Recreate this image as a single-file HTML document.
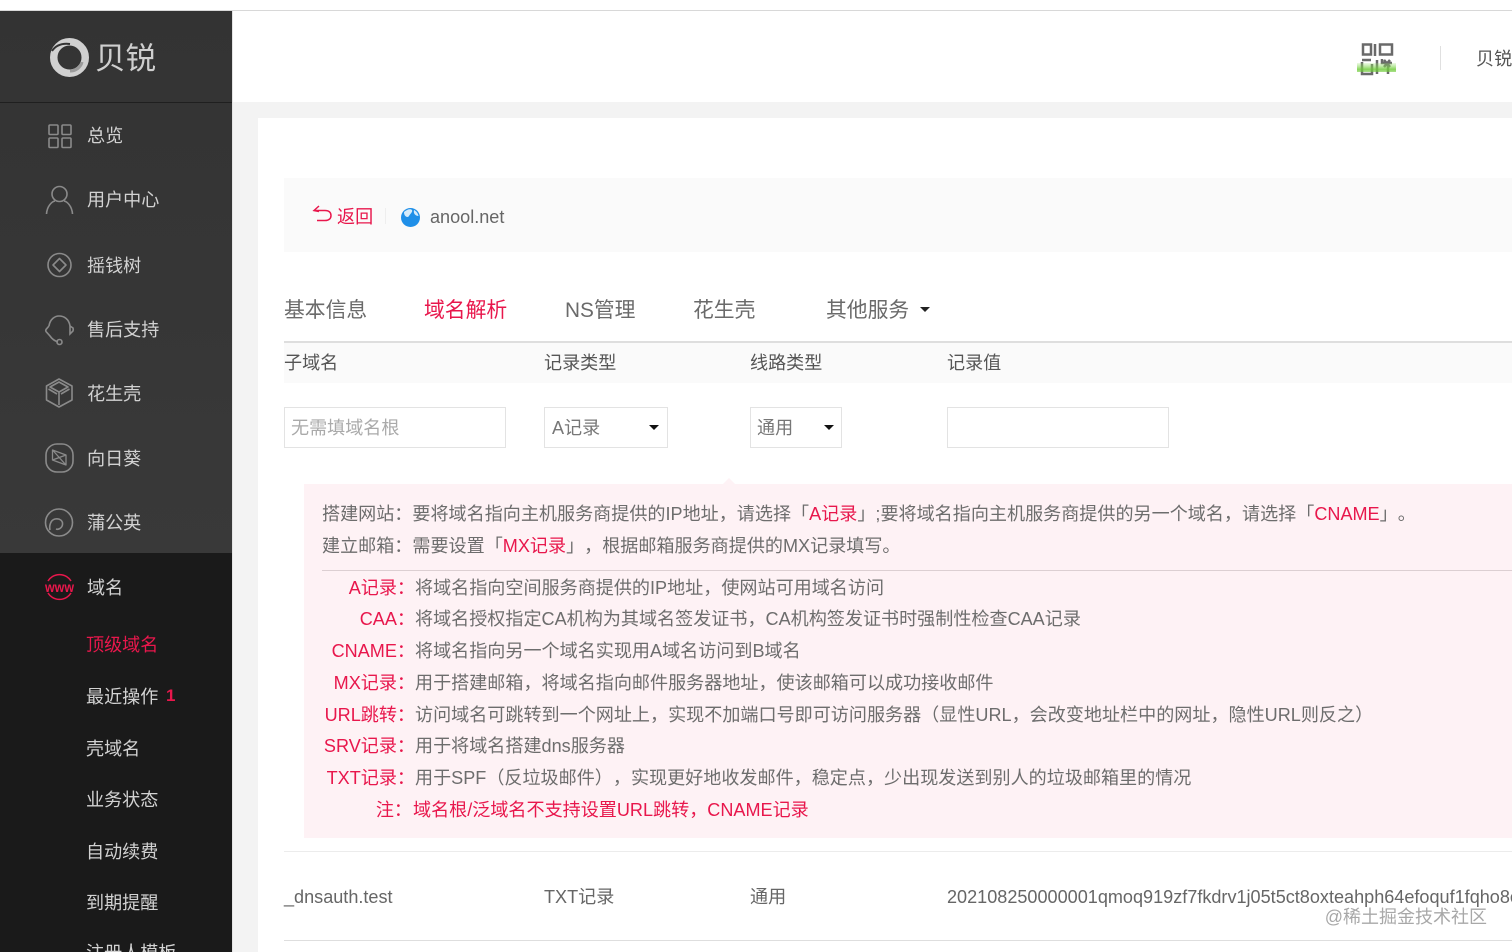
<!DOCTYPE html>
<html lang="zh"><head><meta charset="utf-8"><title>贝锐</title>
<style>
html,body{margin:0;padding:0;width:1512px;height:952px;overflow:hidden;background:#f3f3f3}
body{position:relative;font-family:"Liberation Sans","Noto Sans CJK SC",sans-serif;color:#666;font-size:18.08px;text-spacing-trim:space-all}
.a{position:absolute}
.t{position:absolute;white-space:nowrap;line-height:24px;height:24px}
.s{color:#d2d2d2}
.r{color:#e8174c}
.d{color:#6d6d6d}
svg{position:absolute;overflow:visible}
.i{fill:none;stroke:#8a8a8a;stroke-width:1.6}
</style></head><body>
<div class="a" style="left:0;top:0;width:1512px;height:10px;background:#fff"></div>
<div class="a" style="left:0;top:10px;width:1512px;height:1px;background:#d8d8d8"></div>
<div class="a" style="left:232px;top:11px;width:1280px;height:91px;background:#fff"></div>
<div class="a" style="left:258px;top:118px;width:1254px;height:834px;background:#fff"></div>

<!-- sidebar -->
<div class="a" style="left:0;top:11px;width:232px;height:542px;background:linear-gradient(#333,#393939)"></div>
<div class="a" style="left:0;top:102px;width:232px;height:1px;background:#1f1f1f"></div>
<div class="a" style="left:0;top:553px;width:232px;height:399px;background:#1a1a1a"></div>
<div class="a" style="left:232px;top:11px;width:1px;height:941px;background:#e4e4e4"></div>

<svg style="left:50px;top:38px" width="40" height="40" viewBox="0 0 40 40"><circle cx="19.500" cy="19.500" r="15.750" fill="none" stroke="#d0d0d0" stroke-width="7.500"/><path d="M2 13C6 7 12 5 20 6" fill="none" stroke="#333" stroke-width="2"/><path d="M20 33C26 33 31 29 32 24" fill="none" stroke="#9a9a9a" stroke-width="3"/></svg>
<div class="t" style="left:95px;top:39px;font-size:30.500px;line-height:40px;height:40px;color:#cfcfcf">贝锐</div>

<svg style="left:48px;top:124px" width="24" height="24"><g class="i"><rect x="1" y="1" width="9" height="9.500" rx="1"/><rect x="14" y="1" width="9" height="9.500" rx="1"/><rect x="1" y="14" width="9" height="9.500" rx="1"/><rect x="14" y="14" width="9" height="9.500" rx="1"/></g></svg>
<div class="t s" style="left:87px;top:124px">总览</div>
<svg style="left:45px;top:185px" width="30" height="30"><g class="i"><circle cx="14.500" cy="9" r="7.500"/><path d="M1.500 29C2 21 7 16.500 10 16M27.500 29C27 21 22 16.500 19 16"/></g></svg>
<div class="t s" style="left:87px;top:188px">用户中心</div>
<svg style="left:47px;top:252px" width="26" height="26"><g class="i"><circle cx="12.500" cy="13" r="11.500"/><path d="M12.500 6.500L19 13L12.500 19.500L6 13Z" stroke-linejoin="round"/></g></svg>
<div class="t s" style="left:87px;top:254px">摇钱树</div>
<svg style="left:44px;top:314px" width="32" height="32"><g class="i"><path d="M5 12C6 5 11 2 15 2C20 2 25 5 26 12"/><path d="M5 12L2 15.500Q1.500 16.500 2 17.500L6 22C8 25 11 27 14 28"/><path d="M26 12L29 14Q29.500 15.500 29 17L26 20L26 12"/><circle cx="15.500" cy="28" r="2.500"/></g></svg>
<div class="t s" style="left:87px;top:318px">售后支持</div>
<svg style="left:45px;top:378px" width="30" height="30"><g class="i"><path d="M14 1L27 8V22L14 29L1.500 22V8Z" stroke-linejoin="round"/><path d="M5 9L14 4L23 9L14 14Z" stroke-linejoin="round"/><path d="M14 14V27M3.500 11L12 16M24.500 11L16 16"/></g></svg>
<div class="t s" style="left:87px;top:382px">花生壳</div>
<svg style="left:45px;top:443px" width="30" height="30"><g class="i"><rect x="1" y="1" width="27" height="28" rx="11"/><path d="M7.500 7L21 12V22L7.500 17ZM7.500 7L21 22M21 12L7.500 17" stroke-linejoin="round" stroke-width="1.300"/></g></svg>
<div class="t s" style="left:87px;top:447px">向日葵</div>
<svg style="left:44px;top:507px" width="32" height="32"><g class="i"><circle cx="15" cy="15.500" r="13.500"/><path d="M6 23C5 19 6.500 13 11 12C16 11 19 14 18.500 17.500C18 21 14.500 23 12 22"/></g></svg>
<div class="t s" style="left:87px;top:511px">蒲公英</div>
<svg style="left:45px;top:572px" width="30" height="30"><g fill="none" stroke="#e8174c" stroke-width="1.500"><path d="M3 9A13.500 13.500 0 0 1 26 9M3 21A13.500 13.500 0 0 0 26 21"/></g><text x="14.500" y="20" text-anchor="middle" fill="#e8174c" font-family="Liberation Sans" font-size="14" font-weight="700" textLength="29" lengthAdjust="spacingAndGlyphs">www</text></svg>
<div class="t s" style="left:87px;top:576px">域名</div>
<div class="t r" style="left:86px;top:633px">顶级域名</div>
<div class="t s" style="left:86px;top:685px">最近操作</div>
<div class="t r" style="left:166px;top:684px;font-size:17px;font-weight:700">1</div>
<div class="t s" style="left:86px;top:737px">壳域名</div>
<div class="t s" style="left:86px;top:788px">业务状态</div>
<div class="t s" style="left:86px;top:840px">自动续费</div>
<div class="t s" style="left:86px;top:891px">到期提醒</div>
<div class="t s" style="left:86px;top:941px">注册人模板</div>

<!-- top right -->
<svg style="left:1358px;top:42px" width="40" height="34" fill="none" stroke="#6a6a6a" stroke-width="2.500">
<defs><linearGradient id="g" x1="0" y1="0" x2="0" y2="1"><stop offset="0" stop-color="#9be070" stop-opacity=".2"/><stop offset=".7" stop-color="#72cc3e" stop-opacity=".85"/><stop offset="1" stop-color="#72cc3e" stop-opacity=".6"/></linearGradient></defs>
<rect x="5" y="2.500" width="8" height="10"/><rect x="22" y="2.500" width="12" height="10"/><path d="M17 2V14M4 18H13M4 20V32H14V22M19 18V32M24 17V21H34M26 25L32 18M26 18L32 25M30 21V32"/><rect x="-1" y="21" width="39" height="9" fill="url(#g)" stroke="none"/></svg>
<div class="a" style="left:1440px;top:46px;width:1px;height:24px;background:#e0e0e0"></div>
<div class="t" style="left:1476px;top:47px;color:#555">贝锐</div>

<!-- domain bar -->
<div class="a" style="left:284px;top:178px;width:1228px;height:74px;background:#fafafa"></div>
<svg style="left:313px;top:205px" width="22" height="20" fill="none" stroke="#e8174c" stroke-width="1.500"><path d="M6 1L1 5.500L6 6.500M1.500 5.500H12C16 5.500 18 7.500 18 10.500C18 13.500 16 15.500 12 15.500H4"/></svg>
<div class="t r" style="left:337px;top:205px">返回</div>
<div class="a" style="left:385px;top:208px;width:1px;height:16px;background:#eee"></div>
<svg style="left:400px;top:207px" width="21" height="21"><circle cx="10.500" cy="10.500" r="9.500" fill="#1f8fe8"/><path d="M4 5C7 2.500 10 1.500 12 3C13 5 10 7 9 9C8 11 4 10 4 5ZM14 3C16 4 18 6 18.500 9C16 9 13 7 14 3Z" fill="#d5ebfb"/></svg>
<div class="t" style="left:430px;top:205px;color:#666">anool.net</div>

<!-- tabs -->
<div class="t" style="left:284px;top:299px;font-size:20.800px;color:#6a6a6a">基本信息</div>
<div class="t r" style="left:424px;top:299px;font-size:20.800px">域名解析</div>
<div class="t" style="left:565px;top:299px;font-size:20.800px;color:#6a6a6a">NS管理</div>
<div class="t" style="left:693px;top:299px;font-size:20.800px;color:#6a6a6a">花生壳</div>
<div class="t" style="left:826px;top:299px;font-size:20.800px;color:#6a6a6a">其他服务</div>
<div class="a" style="left:920px;top:307px;width:0;height:0;border:5px solid transparent;border-top:5px solid #222;border-bottom:0"></div>
<div class="a" style="left:284px;top:341px;width:1228px;height:2px;background:#dedede"></div>

<!-- form -->
<div class="a" style="left:284px;top:343px;width:1228px;height:40px;background:#fafafa"></div>
<div class="t" style="left:284px;top:351px;color:#555">子域名</div>
<div class="t" style="left:544px;top:351px;color:#555">记录类型</div>
<div class="t" style="left:750px;top:351px;color:#555">线路类型</div>
<div class="t" style="left:947px;top:351px;color:#555">记录值</div>
<div class="a" style="left:284px;top:407px;width:220px;height:39px;border:1px solid #e3e3e3"></div>
<div class="t" style="left:291px;top:416px;color:#aaa">无需填域名根</div>
<div class="a" style="left:544px;top:407px;width:122px;height:39px;border:1px solid #e3e3e3"></div>
<div class="t" style="left:552px;top:416px;color:#777">A记录</div>
<div class="a" style="left:649px;top:425px;width:0;height:0;border:5px solid transparent;border-top:5px solid #111;border-bottom:0"></div>
<div class="a" style="left:750px;top:407px;width:90px;height:39px;border:1px solid #e3e3e3"></div>
<div class="t" style="left:757px;top:416px;color:#777">通用</div>
<div class="a" style="left:824px;top:425px;width:0;height:0;border:5px solid transparent;border-top:5px solid #111;border-bottom:0"></div>
<div class="a" style="left:947px;top:407px;width:220px;height:39px;border:1px solid #e3e3e3"></div>

<!-- tips -->
<div class="a" style="left:304px;top:484px;width:1208px;height:354px;background:#fef2f5"></div>
<div class="a" style="left:723px;top:478px;width:0;height:0;border:6px solid transparent;border-bottom:6px solid #fef2f5;border-top:0"></div>
<div class="t d" style="left:322px;top:502px">搭建网站&#65306;要将域名指向主机服务商提供的IP地址&#65292;请选择「<span class="r">A记录</span>」;要将域名指向主机服务商提供的另一个域名&#65292;请选择「<span class="r">CNAME</span>」。</div>
<div class="t d" style="left:322px;top:534px">建立邮箱&#65306;需要设置「<span class="r">MX记录</span>」&#65292;根据邮箱服务商提供的MX记录填写。</div>
<div class="a" style="left:322px;top:570px;width:1190px;height:1px;background:#dccfd2"></div>

<div class="t r" style="right:1097px;top:576px">A记录&#65306;</div>
<div class="t d" style="left:415px;top:576px">将域名指向空间服务商提供的IP地址&#65292;使网站可用域名访问</div>
<div class="t r" style="right:1097px;top:607px">CAA&#65306;</div>
<div class="t d" style="left:415px;top:607px">将域名授权指定CA机构为其域名签发证书&#65292;CA机构签发证书时强制性检查CAA记录</div>
<div class="t r" style="right:1097px;top:639px">CNAME&#65306;</div>
<div class="t d" style="left:415px;top:639px">将域名指向另一个域名实现用A域名访问到B域名</div>
<div class="t r" style="right:1097px;top:671px">MX记录&#65306;</div>
<div class="t d" style="left:415px;top:671px">用于搭建邮箱&#65292;将域名指向邮件服务器地址&#65292;使该邮箱可以成功接收邮件</div>
<div class="t r" style="right:1097px;top:703px">URL跳转&#65306;</div>
<div class="t d" style="left:415px;top:703px">访问域名可跳转到一个网址上&#65292;实现不加端口号即可访问服务器&#65288;显性URL&#65292;会改变地址栏中的网址&#65292;隐性URL则反之&#65289;</div>
<div class="t r" style="right:1097px;top:734px">SRV记录&#65306;</div>
<div class="t d" style="left:415px;top:734px">用于将域名搭建dns服务器</div>
<div class="t r" style="right:1097px;top:766px">TXT记录&#65306;</div>
<div class="t d" style="left:415px;top:766px">用于SPF&#65288;反垃圾邮件&#65289;&#65292;实现更好地收发邮件&#65292;稳定点&#65292;少出现发送到别人的垃圾邮箱里的情况</div>
<div class="t r" style="right:1100px;top:798px">注&#65306;</div>
<div class="t r" style="left:413px;top:798px">域名根/泛域名不支持设置URL跳转&#65292;CNAME记录</div>

<!-- row -->
<div class="a" style="left:284px;top:851px;width:1228px;height:1px;background:#ececec"></div>
<div class="t" style="left:284px;top:885px;color:#666">_dnsauth.test</div>
<div class="t" style="left:544px;top:885px;color:#666">TXT记录</div>
<div class="t" style="left:750px;top:885px;color:#666">通用</div>
<div class="t" style="left:947px;top:885px;color:#666">202108250000001qmoq919zf7fkdrv1j05t5ct8oxteahph64efoquf1fqho8e</div>
<div class="a" style="left:284px;top:940px;width:1228px;height:1px;background:#dedede"></div>
<div class="t" style="right:25px;top:905px;font-size:18px;color:#a8a8a8">@稀土掘金技术社区</div>
</body></html>
